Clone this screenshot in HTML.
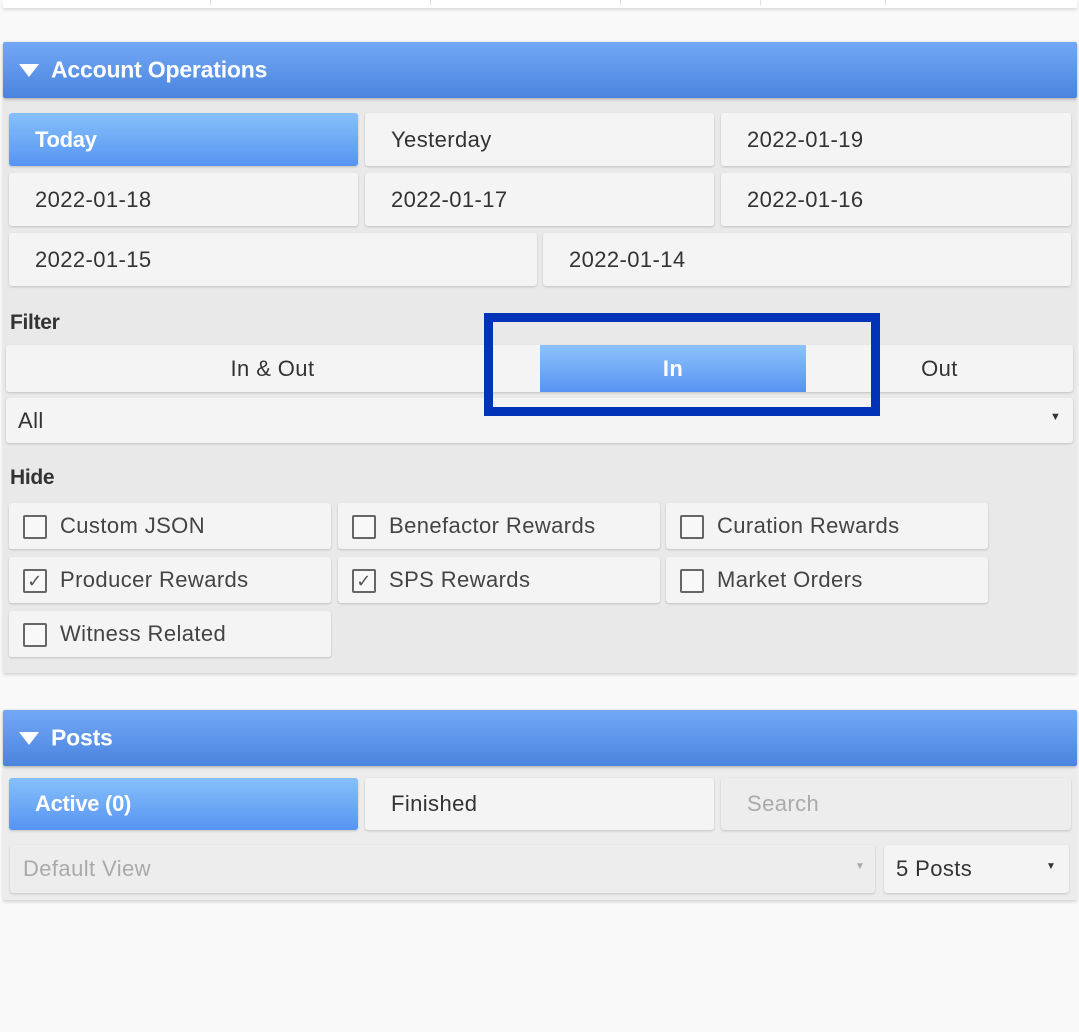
<!DOCTYPE html>
<html><head><meta charset="utf-8"><style>
*{box-sizing:border-box;margin:0;padding:0}
body{width:1079px;height:1032px;background:#f9f9f9;font-family:"Liberation Sans","DejaVu Sans",sans-serif;position:relative;overflow:hidden;color:#333;letter-spacing:0.4px}
.a{position:absolute}
.hdr{background:linear-gradient(#72a8f6,#4b84de);color:#fff;font-size:23px;font-weight:bold;letter-spacing:-0.2px;border-radius:2px;box-shadow:0 1px 3px rgba(0,0,0,.3)}
.hdr span{position:absolute;left:48px;top:50%;transform:translateY(-50%)}
.tri{position:absolute;left:16px;top:50%;margin-top:-6px;width:0;height:0;border-left:10px solid transparent;border-right:10px solid transparent;border-top:13px solid #fff}
.btn{background:#f4f4f4;border-radius:3px;box-shadow:0 1px 2px rgba(0,0,0,.18);font-size:22px;color:#333;display:flex;align-items:center;padding-left:26px}
.blue{background:linear-gradient(#86c0fb,#5794f2);color:#fff;font-weight:bold;letter-spacing:-0.3px}
.cb{background:#f4f4f4;border-radius:3px;box-shadow:0 1px 2px rgba(0,0,0,.18);font-size:22px;color:#444;display:flex;align-items:center;padding-left:51px}
.box{position:absolute;left:14px;top:12px;width:24px;height:24px;border:2px solid #666;border-radius:2px;background:#f8f8f8;font-size:18px;line-height:20px;text-align:center;color:#555}
.lbl{font-size:21px;color:#333;font-weight:bold;letter-spacing:-0.3px}
</style></head><body>
<div class="a" style="left:3px;top:0;width:1074px;height:8px;background:#fff;box-shadow:0 2px 3px rgba(0,0,0,.12)"></div>
<div class="a" style="left:210px;top:0;width:1px;height:5px;background:#ddd"></div>
<div class="a" style="left:430px;top:0;width:1px;height:5px;background:#ddd"></div>
<div class="a" style="left:620px;top:0;width:1px;height:5px;background:#ddd"></div>
<div class="a" style="left:760px;top:0;width:1px;height:5px;background:#ddd"></div>
<div class="a" style="left:885px;top:0;width:1px;height:5px;background:#ddd"></div>

<div class="a" style="left:3px;top:98px;width:1074px;height:575px;background:#e9e9e9;box-shadow:0 2px 3px rgba(0,0,0,.15)"></div>
<div class="a hdr" style="left:3px;top:42px;width:1074px;height:56px"><div class="tri"></div><span>Account Operations</span></div>

<div class="a btn blue" style="left:9px;top:113px;width:349px;height:53px">Today</div>
<div class="a btn" style="left:365px;top:113px;width:349px;height:53px">Yesterday</div>
<div class="a btn" style="left:721px;top:113px;width:350px;height:53px">2022-01-19</div>
<div class="a btn" style="left:9px;top:173px;width:349px;height:53px">2022-01-18</div>
<div class="a btn" style="left:365px;top:173px;width:349px;height:53px">2022-01-17</div>
<div class="a btn" style="left:721px;top:173px;width:350px;height:53px">2022-01-16</div>
<div class="a btn" style="left:9px;top:233px;width:528px;height:53px">2022-01-15</div>
<div class="a btn" style="left:543px;top:233px;width:528px;height:53px">2022-01-14</div>

<div class="a lbl" style="left:10px;top:311px">Filter</div>
<div class="a btn" style="left:6px;top:345px;width:1067px;height:47px;padding:0"></div>
<div class="a" style="left:6px;top:345px;width:533px;height:47px;line-height:47px;text-align:center;font-size:22px;color:#333">In &amp; Out</div>
<div class="a" style="left:540px;top:345px;width:266px;height:47px;line-height:47px;text-align:center;font-size:22px;color:#fff;font-weight:bold;background:linear-gradient(#8cc3fb,#5893f2)">In</div>
<div class="a" style="left:806px;top:345px;width:267px;height:47px;line-height:47px;text-align:center;font-size:22px;color:#333">Out</div>
<div class="a btn" style="left:6px;top:398px;width:1067px;height:45px;padding-left:12px">All</div>
<div class="a" style="left:1050px;top:411px;font-size:11px;color:#333">▼</div>
<div class="a" style="left:484px;top:313px;width:396px;height:103px;border:9px solid #0033b8"></div>

<div class="a lbl" style="left:10px;top:466px">Hide</div>
<div class="a cb" style="left:9px;top:503px;width:322px;height:46px"><div class="box"></div>Custom JSON</div>
<div class="a cb" style="left:338px;top:503px;width:322px;height:46px"><div class="box"></div>Benefactor Rewards</div>
<div class="a cb" style="left:666px;top:503px;width:322px;height:46px"><div class="box"></div>Curation Rewards</div>
<div class="a cb" style="left:9px;top:557px;width:322px;height:46px"><div class="box">✓</div>Producer Rewards</div>
<div class="a cb" style="left:338px;top:557px;width:322px;height:46px"><div class="box">✓</div>SPS Rewards</div>
<div class="a cb" style="left:666px;top:557px;width:322px;height:46px"><div class="box"></div>Market Orders</div>
<div class="a cb" style="left:9px;top:611px;width:322px;height:46px"><div class="box"></div>Witness Related</div>

<div class="a" style="left:3px;top:766px;width:1074px;height:134px;background:#ececec;box-shadow:0 2px 3px rgba(0,0,0,.15)"></div>
<div class="a hdr" style="left:3px;top:710px;width:1074px;height:56px"><div class="tri"></div><span>Posts</span></div>
<div class="a btn blue" style="left:9px;top:778px;width:349px;height:52px">Active (0)</div>
<div class="a btn" style="left:365px;top:778px;width:349px;height:52px">Finished</div>
<div class="a btn" style="left:721px;top:778px;width:350px;height:52px;background:#ededed;color:#aaa">Search</div>
<div class="a btn" style="left:10px;top:845px;width:865px;height:48px;background:#ededed;color:#aaa;padding-left:13px">Default View</div>
<div class="a" style="left:855px;top:861px;font-size:10px;color:#aaa">▼</div>
<div class="a btn" style="left:884px;top:845px;width:185px;height:48px;padding-left:12px">5 Posts</div>
<div class="a" style="left:1046px;top:861px;font-size:10px;color:#333">▼</div>
</body></html>
